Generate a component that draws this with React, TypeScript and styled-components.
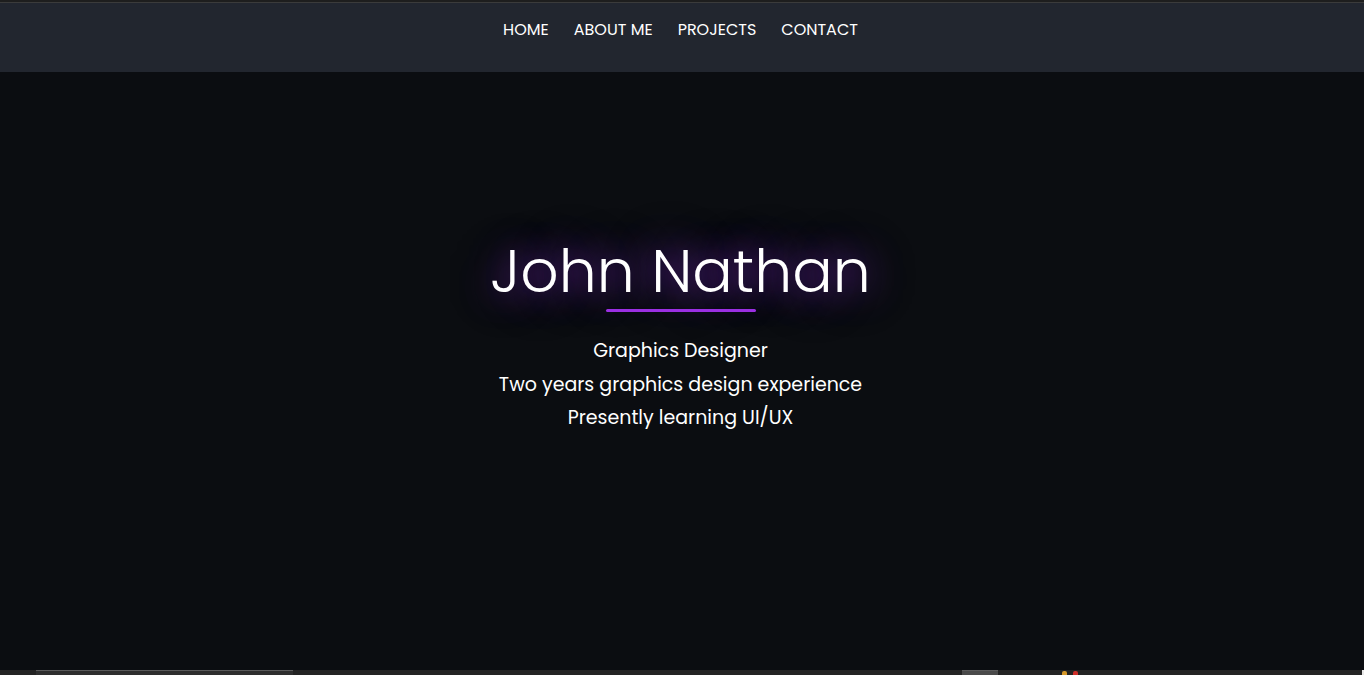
import React from "react";
import styled, { createGlobalStyle } from "styled-components";

const Global = createGlobalStyle`
  html, body { margin: 0; padding: 0; background: #0b0d11; }
  body { font-family: Poppins, "Open Sans", "DejaVu Sans", sans-serif; color: #fff; overflow: hidden; }
  * { box-sizing: border-box; }
`;

const Page = styled.div`
  width: 1364px;
  height: 675px;
  display: flex;
  flex-direction: column;
  background: #0b0d11;
`;

const TopEdge = styled.div`
  height: 3px;
  background: #1e1e1e;
  border-bottom: 1px solid #3b3b3b;
`;

const NavBar = styled.nav`
  height: 69px;
  background: #22262f;
  display: flex;
  justify-content: center;
  padding: 15px 3px 0 0;
  gap: 25px;
`;

const NavLink = styled.a`
  font-family: Poppins, "Open Sans", sans-serif;
  font-size: 16px;
  line-height: 24px;
  color: #fff;
  text-decoration: none;
`;

const Hero = styled.main`
  flex: 1;
  display: flex;
  flex-direction: column;
  align-items: center;
  padding: 163px 3px 0 0;
`;

const Name = styled.h1`
  margin: 0;
  font-family: Poppins, "Open Sans", sans-serif;
  font-weight: 300;
  font-size: 60px;
  line-height: 72px;
  color: #fff;
  text-shadow: 0 0 34px rgba(140, 50, 220, 0.85), 0 0 60px rgba(110, 30, 180, 0.35);
`;

const Underline = styled.div`
  width: 150px;
  height: 3px;
  border-radius: 2px;
  background: #9b2fe3;
  margin-top: 2px;
  margin-bottom: 22px;
`;

const Line = styled.p`
  margin: 0;
  font-family: Poppins, "Open Sans", sans-serif;
  font-size: 19px;
  line-height: 33.5px;
  color: #fff;
`;

const Taskbar = styled.div`
  height: 5px;
  background: #232323;
  display: flex;
  align-items: stretch;
`;

const TaskItem = styled.div<{ $w: number; $ml: number; $bg: string }>`
  width: ${(p) => p.$w}px;
  margin-left: ${(p) => p.$ml}px;
  background: ${(p) => p.$bg};
  border-top: 1px solid #5a5a5a;
`;

const Dot = styled.div<{ $c: string; $ml: number }>`
  width: 5px;
  height: 4px;
  margin-top: 1px;
  margin-left: ${(p) => p.$ml}px;
  border-radius: 2px 2px 0 0;
  background: ${(p) => p.$c};
`;

const EdgeMark = styled.div`
  width: 2px;
  margin-left: auto;
  background: #e8e8e8;
`;

export default function App() {
  return (
    <>
      <Global />
      <Page>
        <TopEdge />
        <NavBar>
          <NavLink href="#">HOME</NavLink>
          <NavLink href="#">ABOUT ME</NavLink>
          <NavLink href="#">PROJECTS</NavLink>
          <NavLink href="#">CONTACT</NavLink>
        </NavBar>
        <Hero>
          <Name>John Nathan</Name>
          <Underline />
          <Line>Graphics Designer</Line>
          <Line>Two years graphics design experience</Line>
          <Line>Presently learning UI/UX</Line>
        </Hero>
        <Taskbar>
          <TaskItem $w={257} $ml={36} $bg="#2e2e2e" />
          <TaskItem $w={36} $ml={669} $bg="#4a4a4a" />
          <Dot $c="#d89a2a" $ml={64} />
          <Dot $c="#d0302a" $ml={6} />
          <EdgeMark />
        </Taskbar>
      </Page>
    </>
  );
}
